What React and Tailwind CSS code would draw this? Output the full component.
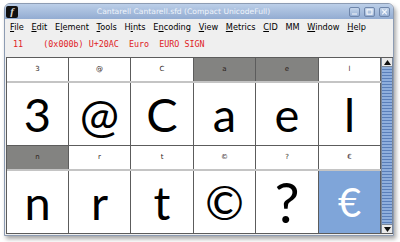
const menus = [
  { pre: '', key: 'F', post: 'ile' },
  { pre: '', key: 'E', post: 'dit' },
  { pre: 'E', key: 'l', post: 'ement' },
  { pre: '', key: 'T', post: 'ools' },
  { pre: 'H', key: 'i', post: 'nts' },
  { pre: 'E', key: 'n', post: 'coding' },
  { pre: '', key: 'V', post: 'iew' },
  { pre: '', key: 'M', post: 'etrics' },
  { pre: '', key: 'C', post: 'ID' },
  { pre: 'MM', key: '', post: '' },
  { pre: '', key: 'W', post: 'indow' },
  { pre: '', key: 'H', post: 'elp' },
];

const widths = ['w-[62px]', 'w-[62px]', 'w-[63px]', 'w-[62px]', 'w-[63px]', 'w-[62px]'];

const rows = [
  [
    { label: '3', glyph: '3' },
    { label: '@', glyph: '@' },
    { label: 'C', glyph: 'C' },
    { label: 'a', glyph: 'a', marked: true },
    { label: 'e', glyph: 'e', marked: true },
    { label: 'l', glyph: 'l' },
  ],
  [
    { label: 'n', glyph: 'n', marked: true },
    { label: 'r', glyph: 'r' },
    { label: 't', glyph: 't' },
    { label: '©', glyph: '©' },
    { label: '?', glyph: '?', size: 'text-[56px]' },
    { label: '€', glyph: '€', selected: true, size: 'text-[40px]' },
  ],
];

const WinButton = ({ children }) => (
  <div className="w-[11px] h-[10px] rounded-[2px] border border-[#6f86ab] bg-gradient-to-b from-[#c5d5ea] to-[#98b0d4] flex items-center justify-center">
    <svg width="7" height="6" viewBox="0 0 7 6" fill="none" stroke="#f4f7fb" strokeWidth="1.2">
      {children}
    </svg>
  </div>
);

const GlyphRow = ({ cells }) => (
  <>
    {/* Label strip */}
    <div className="flex border-b-2 border-[#c4c4c4]">
      {cells.map((c, i) => (
        <div
          key={i}
          className={`${widths[i]} h-[23px] border-r border-[#5c5c5c] flex items-center justify-center text-[7px] text-[#2e2420] ${
            c.marked ? 'bg-[#838381]' : 'bg-white'
          }`}
          style={{ fontFamily: '"DejaVu Sans", sans-serif' }}
        >
          {c.label}
        </div>
      ))}
    </div>
    {/* Glyph strip */}
    <div className="flex">
      {cells.map((c, i) => (
        <div
          key={i}
          className={`${widths[i]} h-[62px] border-r border-[#5c5c5c] flex items-center justify-center leading-none ${
            c.size || 'text-[47px]'
          } ${c.selected ? 'bg-[#7fa5d9] text-white' : 'bg-white text-black'}`}
          style={{ fontFamily: 'Lato, sans-serif' }}
        >
          {c.glyph}
        </div>
      ))}
    </div>
  </>
);

export default function App() {
  return (
    <div className="w-[400px] h-[242px] bg-white pl-[4px] pt-[3px]">
      <div className="w-[390px] flex flex-col bg-[#efefef] border border-[#8d9cb3] rounded-t-[6px] overflow-hidden shadow-[2px_3px_4px_rgba(0,0,0,0.35)]">
        {/* Title bar */}
        <div className="h-[15px] flex items-center gap-[2px] pl-[1px] pr-[3px] bg-gradient-to-b from-[#bccfe8] to-[#93acd2]">
          <div className="w-[12px] h-[12px] rounded-[2px] bg-[#111] flex items-center justify-center">
            <span
              className="text-[11px] italic font-bold text-[#d8d8d8] leading-none"
              style={{ fontFamily: '"Liberation Serif", serif' }}
            >
              f
            </span>
          </div>
          <div
            className="flex-1 text-center text-[7.6px] text-[#eef3fa] leading-none"
            style={{ fontFamily: '"DejaVu Sans", sans-serif' }}
          >
            Cantarell Cantarell.sfd (Compact UnicodeFull)
          </div>
          <div className="flex gap-[4px]">
            <WinButton>
              <path d="M1 5H6" />
            </WinButton>
            <WinButton>
              <rect x="1" y="0.8" width="5" height="4.4" />
            </WinButton>
            <WinButton>
              <path d="M1.2 0.6L5.8 5.4M5.8 0.6L1.2 5.4" />
            </WinButton>
          </div>
        </div>

        {/* Menu bar */}
        <div
          className="h-[17px] flex items-center gap-[7.7px] pl-[5px] text-[8.2px] text-black"
          style={{ fontFamily: '"DejaVu Sans", sans-serif' }}
        >
          {menus.map((m, i) => (
            <span key={i} className="whitespace-pre">
              {m.pre}
              {m.key && <span className="underline underline-offset-1">{m.key}</span>}
              {m.post}
            </span>
          ))}
        </div>

        {/* Info line */}
        <div
          className="h-[17px] flex items-center pl-[8px] text-[8.4px] text-[#e0231f] whitespace-pre"
          style={{ fontFamily: '"DejaVu Sans Mono", monospace' }}
        >
          {'11    (0x000b) U+20AC  Euro  EURO SIGN'}
        </div>

        {/* Font view */}
        <div className="mt-[4px] ml-[1px] mb-[1px] flex border border-[#5c5c5c] border-r-0 bg-white">
          <div className="flex flex-col">
            <GlyphRow cells={rows[0]} />
            <div className="h-px bg-[#5c5c5c]" />
            <GlyphRow cells={rows[1]} />
          </div>

          {/* Scrollbar */}
          <div className="w-[12px] flex flex-col border-x border-[#7a8799] bg-[#e4e4e4]">
            <div className="h-[9px] flex items-center justify-center bg-[#eaeaea] border-b border-[#7a8799]">
              <svg width="7" height="5" viewBox="0 0 7 5">
                <path d="M3.5 0L7 5H0Z" fill="#111" />
              </svg>
            </div>
            <div className="flex-1 bg-[repeating-linear-gradient(to_bottom,#8eaedc_0px,#8eaedc_2px,#5a7fb9_2px,#5a7fb9_3px)]" />
            <div className="h-[9px] flex items-center justify-center bg-[#eaeaea] border-t border-[#7a8799]">
              <svg width="7" height="5" viewBox="0 0 7 5">
                <path d="M0 0H7L3.5 5Z" fill="#111" />
              </svg>
            </div>
          </div>
        </div>
      </div>
    </div>
  );
}
